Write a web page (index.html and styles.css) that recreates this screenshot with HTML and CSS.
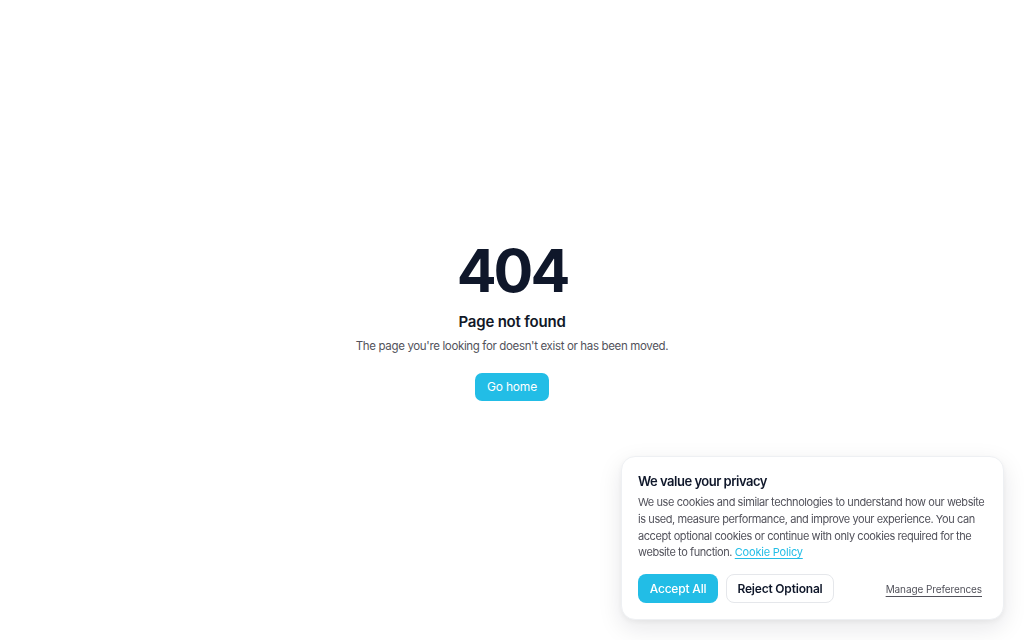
FILE: index.html
```html
<!DOCTYPE html>
<html lang="en">
<head>
<meta charset="utf-8">
<title>404 - Page not found</title>
<link rel="stylesheet" href="styles.css">
</head>
<body>
<main class="notfound">
  <h1 class="code">404</h1>
  <h2 class="title">Page not found</h2>
  <p class="desc">The page you're looking for doesn't exist or has been moved.</p>
  <a class="home-btn" href="#">Go home</a>
</main>
<aside class="cookie">
  <h3 class="cookie-title">We value your privacy</h3>
  <p class="cookie-text">We use cookies and similar technologies to understand how our website is used, measure performance, and improve your experience. You can accept optional cookies or continue with only cookies required for the website to function. <a class="cookie-link" href="#">Cookie Policy</a></p>
  <div class="cookie-actions">
    <button class="btn btn-accept">Accept All</button>
    <button class="btn btn-reject">Reject Optional</button>
    <a class="manage" href="#">Manage Preferences</a>
  </div>
</aside>
</body>
</html>
```
FILE: styles.css
```css
* { box-sizing: border-box; }
html, body { margin: 0; padding: 0; }
body {
  font-family: Inter, "Noto Sans", sans-serif;
  background: #fff;
  color: #0f172a;
  width: 1024px;
  height: 640px;
  overflow: hidden;
}
.notfound {
  height: 640px;
  display: flex;
  flex-direction: column;
  align-items: center;
  justify-content: center;
  text-align: center;
}
.code {
  margin: 0;
  font-size: 59px;
  font-weight: 700;
  line-height: 1;
  letter-spacing: -3px;
  color: #0f172a;
  position: relative;
  top: 1px;
}
.title {
  margin: 12px 0 0;
  font-size: 15px;
  font-weight: 600;
  line-height: 22px;
  letter-spacing: -0.2px;
  color: #111827;
}
.desc {
  margin: 4px 0 0;
  font-size: 11.5px;
  line-height: 18px;
  letter-spacing: -0.35px;
  color: #52525b;
}
.home-btn {
  margin-top: 18px;
  display: inline-flex;
  align-items: center;
  justify-content: center;
  height: 28px;
  width: 74px;
  border-radius: 7px;
  background: #22bde6;
  color: #fff;
  font-size: 12px;
  letter-spacing: -0.2px;
  text-decoration: none;
}
.cookie {
  position: fixed;
  right: 20px;
  bottom: 20px;
  width: 383px;
  padding: 15px 16px 16px;
  background: #fff;
  border: 1px solid #eef0f3;
  border-radius: 14px;
  box-shadow: 0 8px 24px rgba(15, 23, 42, 0.10), 0 2px 6px rgba(15, 23, 42, 0.05);
}
.cookie-title {
  margin: 0;
  font-size: 13px;
  font-weight: 600;
  line-height: 18px;
  letter-spacing: -0.5px;
  color: #0f172a;
}
.cookie-text {
  margin: 4px 0 0;
  font-size: 11px;
  line-height: 16.7px;
  letter-spacing: -0.42px;
  color: #52525b;
}
.cookie-link {
  color: #22bde6;
  letter-spacing: -0.2px;
  text-decoration: underline;
  text-underline-offset: 2px;
}
.cookie-actions {
  margin-top: 13px;
  display: flex;
  align-items: center;
  gap: 8px;
}
.btn {
  height: 29px;
  border-radius: 8px;
  font-family: inherit;
  font-size: 12px;
  font-weight: 500;
  letter-spacing: -0.2px;
  padding: 0;
  white-space: nowrap;
  cursor: pointer;
}
.btn-accept {
  width: 80px;
  background: #22bde6;
  color: #fff;
  border: none;
}
.btn-reject {
  width: 108px;
  background: #fff;
  color: #0f172a;
  border: 1px solid #e5e7eb;
  font-weight: 600;
}
.manage {
  margin-left: auto;
  font-size: 10px;
  letter-spacing: -0.1px;
  color: #52525b;
  text-decoration: underline;
  text-underline-offset: 3px;
  padding-right: 5px;
}
```
